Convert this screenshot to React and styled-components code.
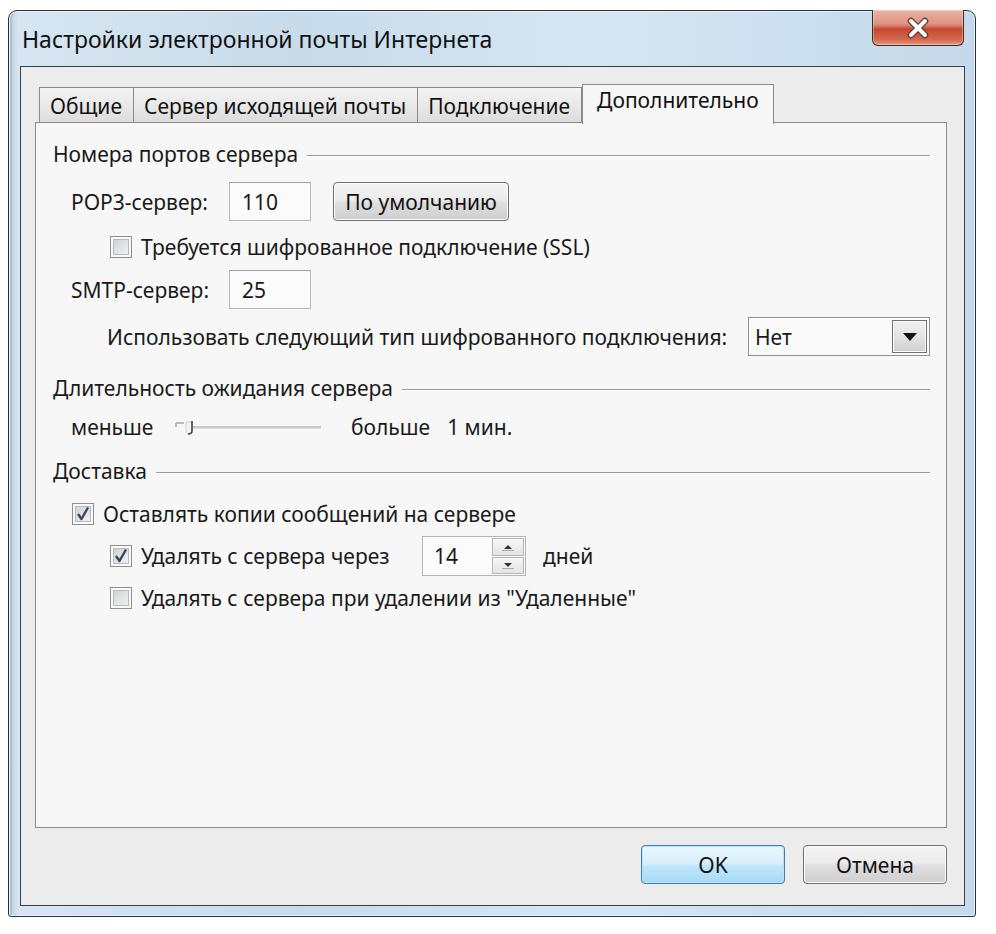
import React from "react";
import styled, { createGlobalStyle } from "styled-components";

const Global = createGlobalStyle`
  html, body { margin: 0; padding: 0; background: #ffffff; }
  body { font-family: "Noto Sans", "Open Sans", sans-serif; color: #1a1a1a; }
  * { box-sizing: border-box; }
`;

const Page = styled.div`
  width: 996px;
  height: 934px;
  padding: 10px 0 0 8px;
`;

const Window = styled.div`
  width: 968px;
  height: 907px;
  border: 1px solid #26323e;
  border-radius: 9px 9px 3px 3px;
  background: linear-gradient(90deg, #b9cfe2 0%, #d6e5f1 1%, #c8dbea 30%, #d5e6f3 60%, #c5d9ea 100%);
  display: flex;
  flex-direction: column;
  padding: 0 10px 10px 11px;
  box-shadow: inset 0 0 0 1px #e8f1f8, inset 5px 0 0 -2px #a9c2d8;
`;

const TitleBar = styled.div`
  height: 55px;
  display: flex;
  justify-content: space-between;
  align-items: flex-start;
`;

const Title = styled.div`
  font-size: 23px;
  color: #111;
  margin-top: 12px;
  margin-left: 2px;
`;

const CloseBtn = styled.div`
  width: 92px;
  height: 36px;
  margin-right: 1px;
  margin-top: -1px;
  border: 1px solid #3a2a28;
  border-top: none;
  border-radius: 0 0 6px 6px;
  background: linear-gradient(180deg, #eab2a2 0%, #de9380 40%, #c7472e 55%, #d36a4f 85%, #e89a7e 100%);
  display: flex;
  align-items: center;
  justify-content: center;
  box-shadow: inset 0 0 0 1px rgba(255,255,255,0.35);
`;

const Client = styled.div`
  flex: 1;
  border: 1px solid #33404c;
  background: #ececec;
  display: flex;
  flex-direction: column;
  padding: 16px 17px 20px 14px;
`;

const TabStrip = styled.div`
  display: flex;
  align-items: flex-end;
  height: 40px;
  padding-left: 4px;
  position: relative;
  z-index: 1;
`;

const Tab = styled.div`
  height: ${(p) => (p.$active ? "40px" : "36px")};
  margin-bottom: ${(p) => (p.$active ? "-1px" : "0")};
  padding: ${(p) => (p.$active ? "1px 14px 0 14px" : "4px 11px 0 10px")};
  font-size: 21px;
  border: 1px solid #8a8a8a;
  border-bottom: ${(p) => (p.$active ? "none" : "1px solid #8a8a8a")};
  margin-right: ${(p) => (p.$active ? "0" : "-1px")};
  background: ${(p) =>
    p.$active ? "#f7f7f7" : "linear-gradient(180deg, #f3f3f3 0%, #e9e9e9 50%, #dcdcdc 100%)"};
  color: #111;
  white-space: nowrap;
  margin-left: ${(p) => (p.$active ? "1px" : "0")};
`;

const Panel = styled.div`
  height: 706px;
  border: 1px solid #8a8a8a;
  background: #f7f7f7;
  margin-top: -1px;
  padding: 19px 16px 0 17px;
  display: flex;
  flex-direction: column;
`;

const GroupHeader = styled.div`
  height: 24px;
  margin-top: ${(p) => p.$mt || 0}px;
  display: flex;
  align-items: center;
  gap: 9px;
  font-size: 21px;
  &::after {
    content: "";
    flex: 1;
    height: 1px;
    background: #9a9a9a;
    box-shadow: 0 1px 0 #ffffff;
    margin-top: 2px;
  }
`;

const Row = styled.div`
  height: ${(p) => p.$h || 24}px;
  margin-top: ${(p) => p.$mt || 0}px;
  padding-left: ${(p) => p.$indent || 0}px;
  display: flex;
  align-items: center;
  font-size: 21px;
  white-space: nowrap;
`;

const Label = styled.span`
  width: ${(p) => (p.$w ? `${p.$w}px` : "auto")};
  flex: none;
  margin-right: ${(p) => p.$mr || 0}px;
  margin-left: ${(p) => p.$ml || 0}px;
`;

const TextBox = styled.div`
  width: ${(p) => p.$w}px;
  height: 39px;
  border: 1px solid #b4b6bb;
  border-top-color: #9da0a6;
  background: #fbfbfb;
  display: flex;
  align-items: center;
  padding-left: ${(p) => p.$pl || 12}px;
  font-size: 21px;
  flex: none;
`;

const PushButton = styled.div`
  width: ${(p) => p.$w}px;
  height: 39px;
  margin-left: ${(p) => p.$ml || 0}px;
  border: 1px solid ${(p) => (p.$focus ? "#3c7fb1" : "#707070")};
  border-radius: 4px;
  background: ${(p) =>
    p.$focus
      ? "linear-gradient(180deg, #eaf6fd 0%, #d9f0fc 45%, #bee6fd 55%, #a7d9f5 100%)"
      : "linear-gradient(180deg, #f4f4f4 0%, #ebebeb 45%, #dddddd 55%, #cfcfcf 100%)"};
  box-shadow: inset 0 0 0 1px ${(p) => (p.$focus ? "#b6e4fb" : "#fcfcfc")};
  display: flex;
  align-items: center;
  justify-content: center;
  font-size: 21px;
  color: #111;
  flex: none;
`;

const CheckWrap = styled.span`
  width: 22px;
  height: 22px;
  flex: none;
  margin-right: ${(p) => p.$mr || 9}px;
  display: inline-flex;
`;

const Select = styled.div`
  margin-left: auto;
  width: 182px;
  height: 39px;
  border: 1px solid #8e8f8f;
  background: #fafafa;
  display: flex;
  align-items: center;
  justify-content: space-between;
  padding: 0 2px 0 6px;
  font-size: 21px;
`;

const DropBtn = styled.div`
  width: 35px;
  height: 33px;
  border: 1px solid #707070;
  background: linear-gradient(180deg, #f0f0f0 0%, #e3e3e3 50%, #d0d0d0 100%);
  box-shadow: inset 0 0 0 1px #fbfbfb;
  display: flex;
  align-items: center;
  justify-content: center;
`;

const Spinner = styled.div`
  width: 104px;
  height: 40px;
  border: 1px solid #b4b6bb;
  background: #fbfbfb;
  display: flex;
  align-items: center;
  justify-content: space-between;
  padding: 0 1px 0 11px;
  font-size: 21px;
  margin-right: 17px;
  flex: none;
`;

const SpinBtns = styled.div`
  width: 32px;
  height: 36px;
  display: flex;
  flex-direction: column;
  gap: 1px;
`;

const SpinBtn = styled.div`
  flex: 1;
  border: 1px solid #b4b6bb;
  background: linear-gradient(180deg, #f7f7f7, #e4e4e4);
  display: flex;
  align-items: center;
  justify-content: center;
`;

const Footer = styled.div`
  display: flex;
  justify-content: flex-end;
  gap: 18px;
  margin-top: 17px;
`;

function Check({ checked, mr }) {
  return (
    <CheckWrap $mr={mr}>
      <svg width="22" height="22" viewBox="0 0 22 22">
        <defs>
          <linearGradient id="cbg" x1="0" y1="0" x2="1" y2="1">
            <stop offset="0" stopColor="#cfd1d3" />
            <stop offset="1" stopColor="#f2f2f2" />
          </linearGradient>
        </defs>
        <rect x="0.5" y="0.5" width="21" height="21" fill="#fafafa" stroke="#8e8f8f" />
        <rect x="3.5" y="3.5" width="15" height="15" fill="url(#cbg)" stroke="#b8babc" />
        {checked && (
          <path d="M6 11 L9.5 16 L16 4.5" fill="none" stroke="#3a4660" strokeWidth="2.4" strokeLinejoin="round" />
        )}
      </svg>
    </CheckWrap>
  );
}

function Slider() {
  return (
    <svg width="150" height="24" viewBox="0 0 150 24" style={{ flex: "none" }}>
      <path d="M2 8 H10 M2 8 V12" stroke="#a8a8a8" strokeWidth="1.5" fill="none" />
      <line x1="18" y1="12" x2="147" y2="12" stroke="#9a9a9a" strokeWidth="1" />
      <line x1="18" y1="13.5" x2="147" y2="13.5" stroke="#e0e0e0" strokeWidth="1" />
      <path d="M12 7 H18 V16 L15 19 L12 16 Z" fill="#f2f2f2" stroke="#d0d0d0" strokeWidth="1" />
      <path d="M18 6 V16 Q18 19 14 19" fill="none" stroke="#444" strokeWidth="1.6" />
    </svg>
  );
}

export default function App() {
  return (
    <>
      <Global />
      <Page>
        <Window>
          <TitleBar>
            <Title>Настройки электронной почты Интернета</Title>
            <CloseBtn>
              <svg width="30" height="22" viewBox="0 0 30 22">
                <path d="M8 4 L22 18 M22 4 L8 18" stroke="#5a3a32" strokeWidth="6.5" strokeLinecap="round" />
                <path d="M8 4 L22 18 M22 4 L8 18" stroke="#ffffff" strokeWidth="4" strokeLinecap="round" />
              </svg>
            </CloseBtn>
          </TitleBar>
          <Client>
            <TabStrip>
              <Tab>Общие</Tab>
              <Tab>Сервер исходящей почты</Tab>
              <Tab>Подключение</Tab>
              <Tab $active>Дополнительно</Tab>
            </TabStrip>
            <Panel>
              <GroupHeader>Номера портов сервера</GroupHeader>
              <Row $h={39} $mt={16} $indent={18}>
                <Label $w={158}>POP3-сервер:</Label>
                <TextBox $w={82}>110</TextBox>
                <PushButton $w={176} $ml={22}>По умолчанию</PushButton>
              </Row>
              <Row $mt={14} $indent={57}>
                <Check />
                Требуется шифрованное подключение (SSL)
              </Row>
              <Row $h={39} $mt={11} $indent={18}>
                <Label $w={158}>SMTP-сервер:</Label>
                <TextBox $w={82}>25</TextBox>
              </Row>
              <Row $h={39} $mt={8} $indent={54}>
                <Label>Использовать следующий тип шифрованного подключения:</Label>
                <Select>
                  <span>Нет</span>
                  <DropBtn>
                    <svg width="14" height="8" viewBox="0 0 14 8">
                      <path d="M0 0 H14 L7 8 Z" fill="#111" />
                    </svg>
                  </DropBtn>
                </Select>
              </Row>
              <GroupHeader $mt={20}>Длительность ожидания сервера</GroupHeader>
              <Row $mt={15} $indent={18}>
                <Label $w={103}>меньше</Label>
                <Slider />
                <Label $mr={17} $ml={27}>больше</Label>
                <Label>1 мин.</Label>
              </Row>
              <GroupHeader $mt={20}>Доставка</GroupHeader>
              <Row $mt={19} $indent={19}>
                <Check checked />
                Оставлять копии сообщений на сервере
              </Row>
              <Row $h={40} $mt={10} $indent={57}>
                <Check checked />
                <Label $w={281}>Удалять с сервера через</Label>
                <Spinner>
                  <span>14</span>
                  <SpinBtns>
                    <SpinBtn>
                      <svg width="14" height="8" viewBox="0 0 14 8">
                        <path d="M3 6 L7 2 L11 6 Z" fill="#333" />
                        <line x1="1" y1="7.5" x2="13" y2="7.5" stroke="#aaa" />
                      </svg>
                    </SpinBtn>
                    <SpinBtn>
                      <svg width="14" height="8" viewBox="0 0 14 8">
                        <path d="M3 2 L7 6 L11 2 Z" fill="#333" />
                        <line x1="1" y1="7.5" x2="13" y2="7.5" stroke="#aaa" />
                      </svg>
                    </SpinBtn>
                  </SpinBtns>
                </Spinner>
                дней
              </Row>
              <Row $mt={10} $indent={57}>
                <Check />
                Удалять с сервера при удалении из "Удаленные"
              </Row>
            </Panel>
            <Footer>
              <PushButton $w={144} $focus>OK</PushButton>
              <PushButton $w={144}>Отмена</PushButton>
            </Footer>
          </Client>
        </Window>
      </Page>
    </>
  );
}
